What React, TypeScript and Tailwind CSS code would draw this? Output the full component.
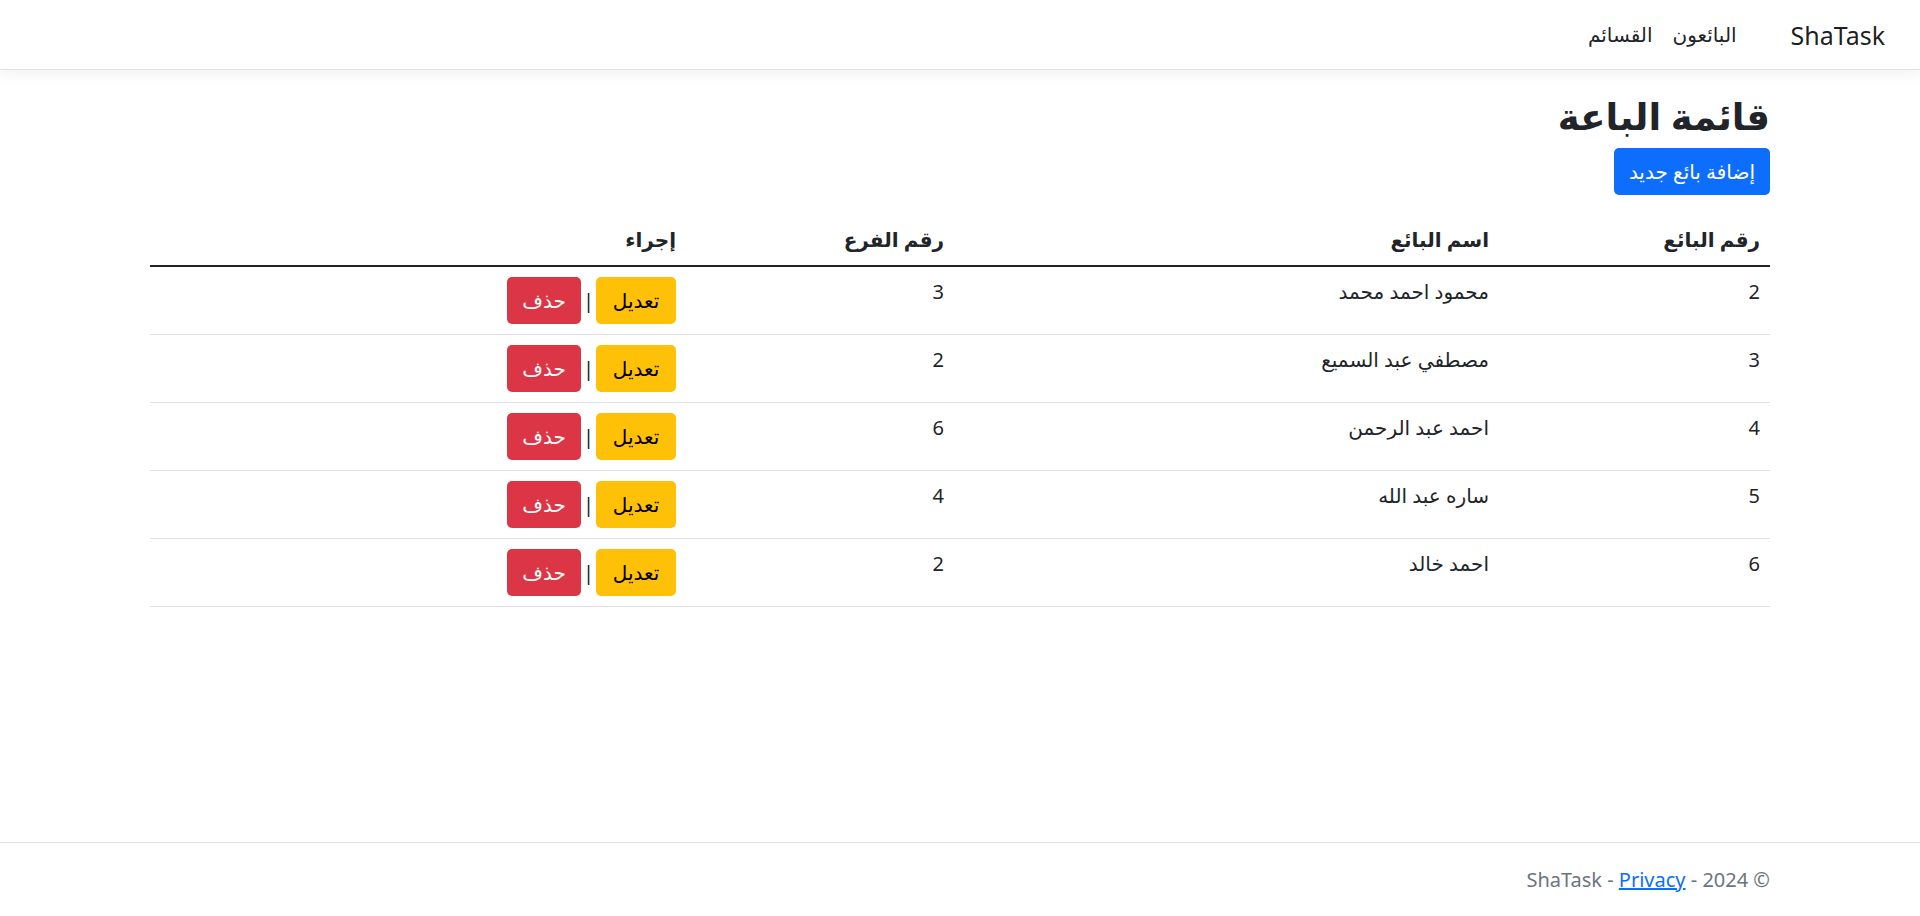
import React from 'react';

const sellers = [
  { id: 2, name: 'محمود احمد محمد', branch: 3 },
  { id: 3, name: 'مصطفي عبد السميع', branch: 2 },
  { id: 4, name: 'احمد عبد الرحمن', branch: 6 },
  { id: 5, name: 'ساره عبد الله', branch: 4 },
  { id: 6, name: 'احمد خالد', branch: 2 },
];

const font = { fontFamily: '"Segoe UI", "Noto Sans", "DejaVu Sans", sans-serif' };

export default function App() {
  return (
    <div dir="rtl" style={font} className="min-h-screen h-[916px] flex flex-col bg-white text-[#212529] text-[20px] leading-[30px]">
      {/* navbar */}
      <header className="h-[70px] shrink-0 bg-white border-b border-[#dee2e6] shadow-[0_5px_15px_rgba(0,0,0,0.05)] flex items-center pr-[35px]">
        <a className="text-[25px] leading-[38px] text-[rgba(0,0,0,0.9)] whitespace-nowrap" dir="ltr">ShaTask</a>
        <nav className="flex items-center mr-[44px]">
          <a className="px-[10px] text-[#212529]">البائعون</a>
          <a className="px-[10px] text-[#212529]">القسائم</a>
        </nav>
      </header>

      <main className="w-[1620px] mx-auto pt-[16px]">
        <h1 className="text-[37px] leading-[60px] font-bold mb-[2px]">قائمة الباعة</h1>
        <div className="mb-[20px] flex">
          <button className="h-[47px] px-[15px] rounded-[5px] bg-[#0d6efd] text-white text-[20px]">إضافة بائع جديد</button>
        </div>

        <table className="w-full border-collapse">
          <thead>
            <tr>
              <th className="w-[271px] text-right font-bold px-[10px] py-[10px] border-b-2 border-[#212529]">رقم البائع</th>
              <th className="w-[545px] text-right font-bold px-[10px] py-[10px] border-b-2 border-[#212529]">اسم البائع</th>
              <th className="w-[268px] text-right font-bold px-[10px] py-[10px] border-b-2 border-[#212529]">رقم الفرع</th>
              <th className="text-right font-bold px-[10px] py-[10px] border-b-2 border-[#212529]">إجراء</th>
            </tr>
          </thead>
          <tbody>
            {sellers.map((s) => (
              <tr key={s.id}>
                <td className="align-top p-[10px] border-b border-[#dee2e6]">{s.id}</td>
                <td className="align-top p-[10px] border-b border-[#dee2e6]">{s.name}</td>
                <td className="align-top p-[10px] border-b border-[#dee2e6]">{s.branch}</td>
                <td className="align-top p-[10px] border-b border-[#dee2e6]">
                  <div className="flex items-center">
                    <button className="w-[80px] h-[47px] rounded-[5px] bg-[#ffc107] text-black text-[20px]">تعديل</button>
                    <span className="w-[15px] text-center">|</span>
                    <button className="w-[74px] h-[47px] rounded-[5px] bg-[#dc3545] text-white text-[20px]">حذف</button>
                  </div>
                </td>
              </tr>
            ))}
          </tbody>
        </table>
      </main>

      <footer className="mt-auto h-[74px] shrink-0 border-t border-[#dee2e6] text-[#6c757d] leading-[73px] whitespace-pre">
        <div dir="ltr" className="w-[1620px] mx-auto flex justify-end">
          <span>ShaTask - </span>
          <a className="text-[#0d6efd] underline">Privacy</a>
          <span> - 2024 ©</span>
        </div>
      </footer>
    </div>
  );
}
